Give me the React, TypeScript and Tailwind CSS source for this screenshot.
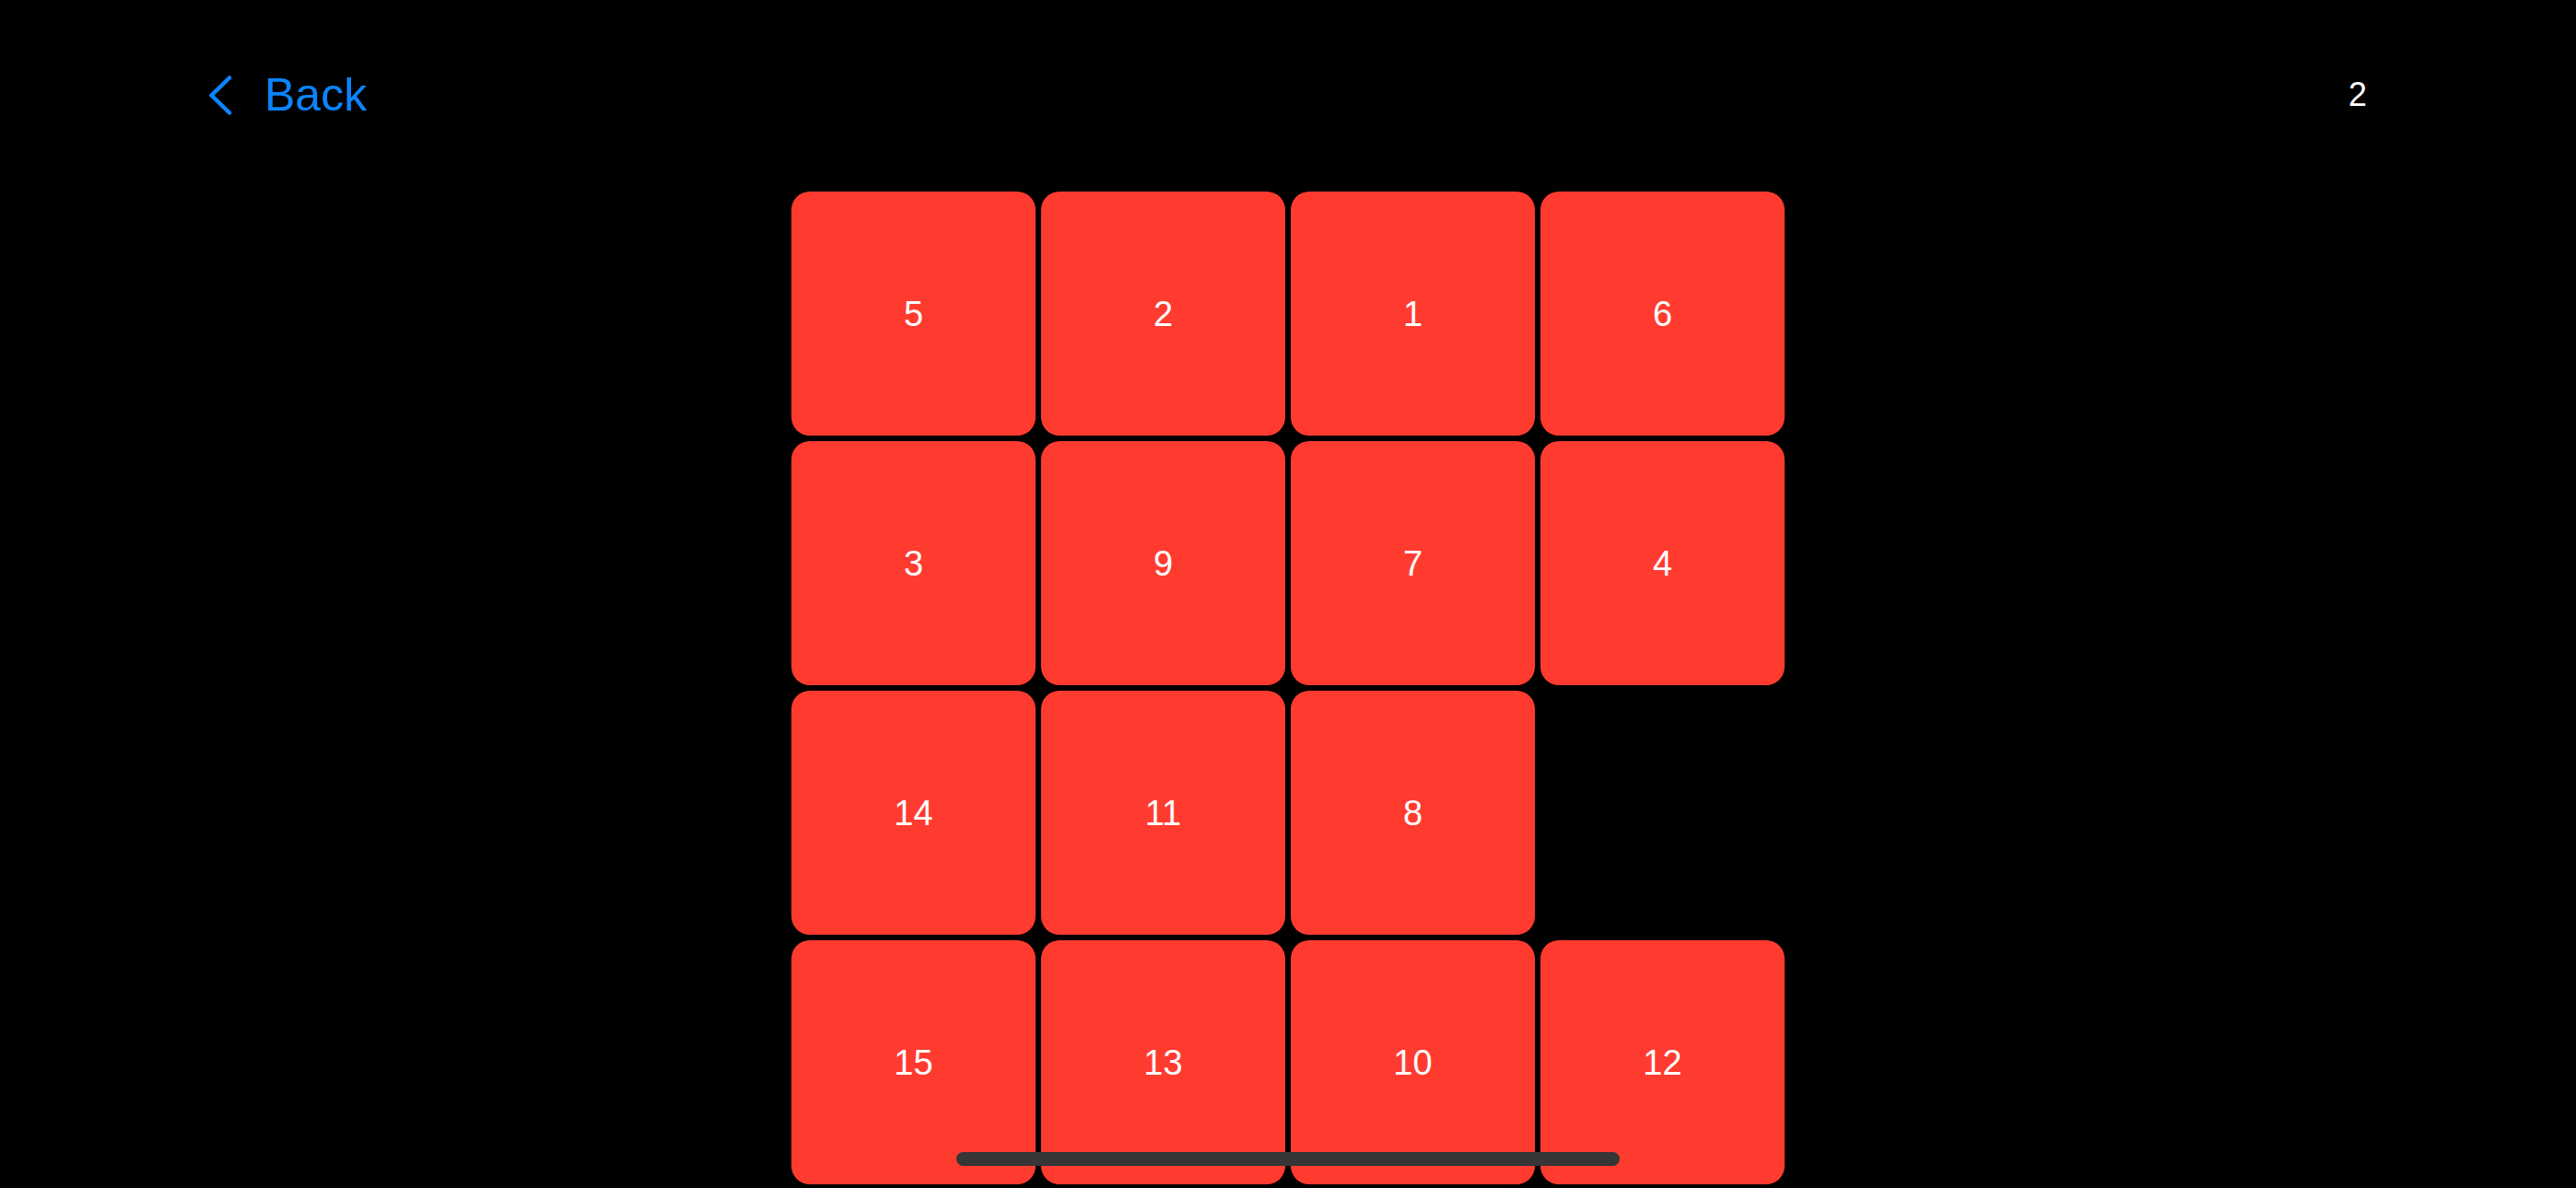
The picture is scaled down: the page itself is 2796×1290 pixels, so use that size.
import React from 'react';

const tiles: (number | null)[] = [5, 2, 1, 6, 3, 9, 7, 4, 14, 11, 8, null, 15, 13, 10, 12];

const Tile: React.FC<{ value: number | null }> = ({ value }) => {
  if (value === null) return <div className="w-[265px] h-[265px]" />;
  return (
    <button className="w-[265px] h-[265px] rounded-[20px] bg-[#ff3b30] flex items-center justify-center text-white text-[38px] leading-none">
      {value}
    </button>
  );
};

export default function App() {
  return (
    <div
      className="relative w-full h-[1290px] overflow-hidden bg-black"
      style={{ fontFamily: '"Liberation Sans", Arial, sans-serif' }}
    >
      <div className="h-[206px] px-[227px] flex items-center justify-between">
        <button className="flex items-center gap-[35px] text-[#0a84ff]">
          <svg width="25" height="43" viewBox="0 0 25 43" fill="none">
            <path d="M22 2.5 L2.5 21.5 L22 40.5" stroke="currentColor" strokeWidth="4.5" strokeLinecap="round" strokeLinejoin="round" />
          </svg>
          <span className="text-[50px] leading-none">Back</span>
        </button>
        <span className="text-white text-[36px] leading-none">2</span>
      </div>
      <div className="mt-[2px] grid grid-cols-[repeat(4,265px)] gap-[6px] justify-center">
        {tiles.map((t, i) => (
          <Tile key={i} value={t} />
        ))}
      </div>
      <div className="absolute bottom-[24px] left-1/2 -translate-x-1/2 w-[720px] h-[15px] rounded-full bg-[#363636]" />
    </div>
  );
}
